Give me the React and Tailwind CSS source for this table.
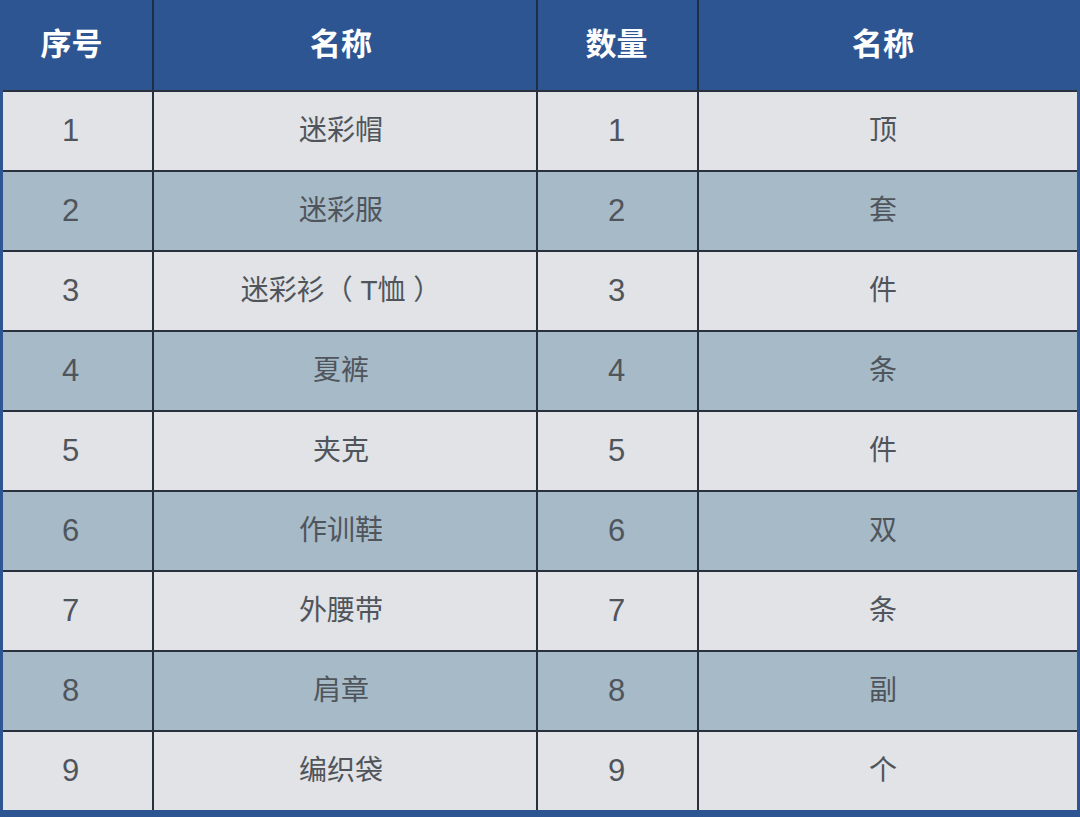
const rows = [
  ['1', '迷彩帽', '1', '顶'],
  ['2', '迷彩服', '2', '套'],
  ['3', '迷彩衫（ T恤 ）', '3', '件'],
  ['4', '夏裤', '4', '条'],
  ['5', '夹克', '5', '件'],
  ['6', '作训鞋', '6', '双'],
  ['7', '外腰带', '7', '条'],
  ['8', '肩章', '8', '副'],
  ['9', '编织袋', '9', '个'],
];

const cols = 'grid grid-cols-[149px_384px_161px_1fr]';
const cell = 'flex items-center justify-center';

export default function App() {
  return (
    <div
      className="w-[1080px] h-[817px] bg-[#2d5592] border-l-[3px] border-r-[3px] border-b-[7px] border-[#2d5592] box-border overflow-hidden"
      style={{ fontFamily: '"Liberation Sans", "Noto Sans CJK SC", sans-serif' }}
    >
      <div className={`${cols} h-[90px] bg-[#2d5592] text-white text-[31px] font-bold`}>
        <div className={`${cell} pr-[12px]`}>序号</div>
        <div className={`${cell} pr-[8px] border-l-2 border-[#1f2d45]`}>名称</div>
        <div className={`${cell} pr-[2px] border-l-2 border-[#1f2d45]`}>数量</div>
        <div className={`${cell} pr-[10px] border-l-2 border-[#1f2d45]`}>名称</div>
      </div>
      {rows.map((r, i) => (
        <div
          key={i}
          className={`${cols} h-[80px] border-t-2 border-[#28313d] text-[28px] text-[#50555c] ${i % 2 === 0 ? 'bg-[#e1e3e7]' : 'bg-[#a6bac8]'}`}
        >
          <div className={`${cell} pr-[14px] text-[31px]`}>{r[0]}</div>
          <div className={`${cell} pr-[8px] border-l-2 border-[#28313d]`}>{r[1]}</div>
          <div className={`${cell} pr-[2px] text-[31px] border-l-2 border-[#28313d]`}>{r[2]}</div>
          <div className={`${cell} pr-[10px] border-l-2 border-[#28313d]`}>{r[3]}</div>
        </div>
      ))}
    </div>
  );
}
